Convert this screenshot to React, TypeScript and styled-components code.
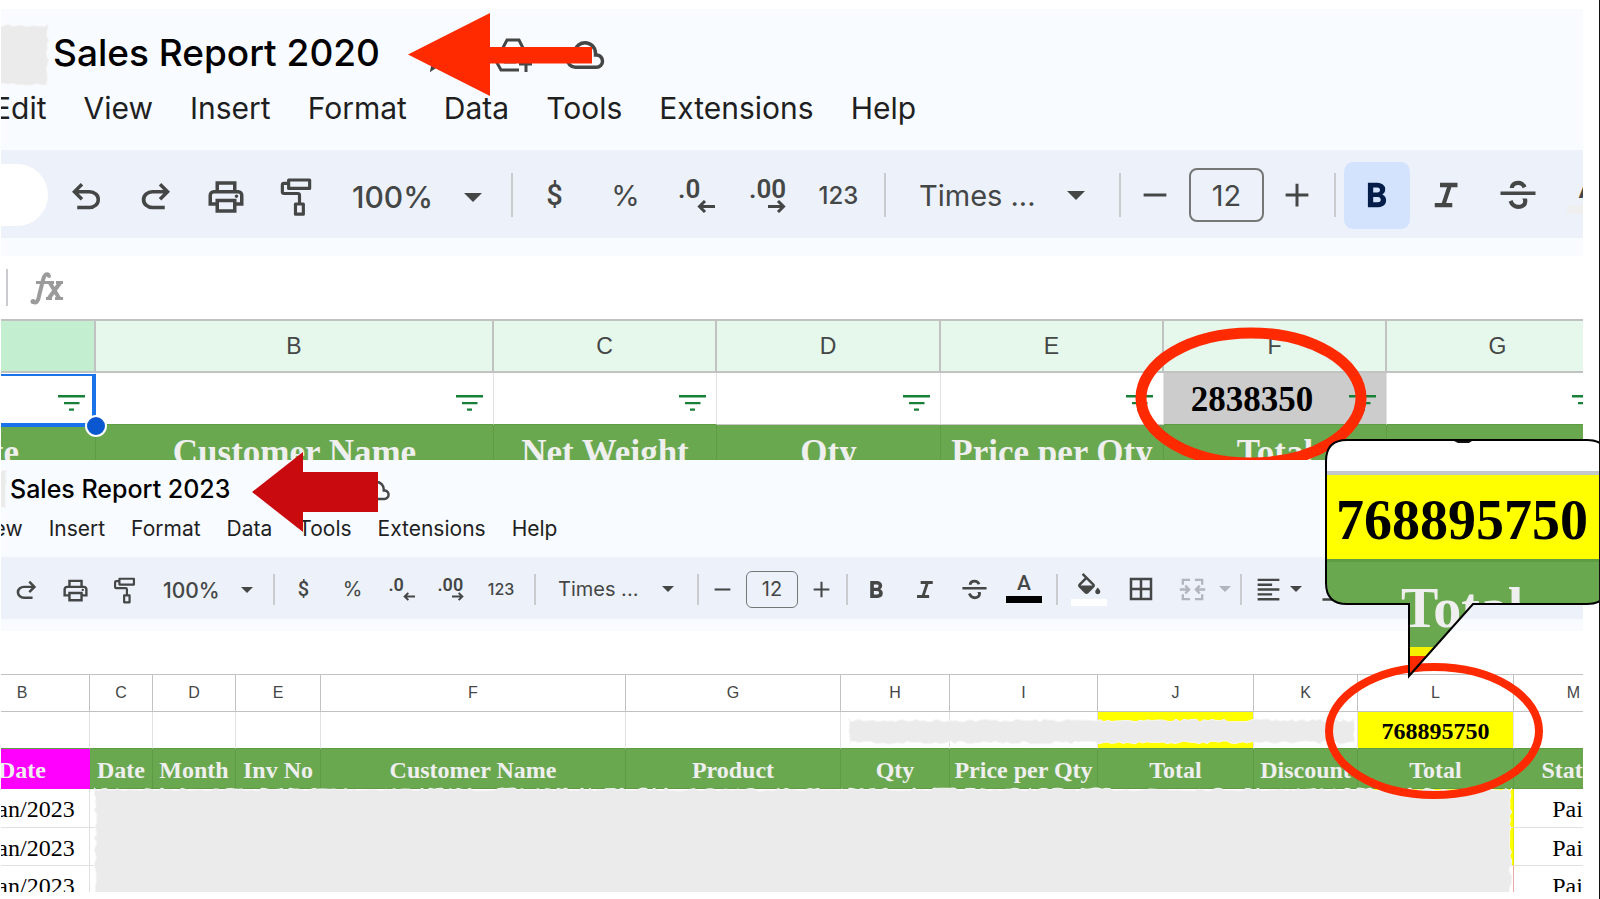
import React from 'react';
import styled, { createGlobalStyle, css, ThemeProvider } from 'styled-components';

const GlobalStyle = createGlobalStyle`
  *, *::before, *::after { box-sizing: border-box; }
  body { margin: 0; background: #fff; }
  h1 { margin: 0; }
  button, select, input { font: inherit; color: inherit; }
`;

const UI = '"Inter", "Roboto", sans-serif';
const NARROW = '"Roboto", "Inter", sans-serif';
const SERIF = '"Liberation Serif", "Times New Roman", serif';
const ARIAL = '"Liberation Sans", Arial, sans-serif';

/* Two zoom levels of the same spreadsheet chrome. */
const large = {
  headHeight: 141, headPad: 22, title: 37, titleLine: 44, titlePad: 52,
  menu: 30, menuLine: 36, menuGap: 37, menuTop: 15, menuStart: -8,
  bar: 88, strip: 18, formula: 63, tool: 30, font: 29, sub: 26, num: 24, icon: 42, drop: 4,
  divH: 44, divMargin: '0 6px 0 10px', boxW: 75, boxH: 54, boxBorder: 2, boxRadius: 8, boxGap: 6,
  caretW: 18, caretH: 9, swatchW: 44, swatchH: 9, activeH: 67,
  gridLine: 2, letter: 23, cell: 35,
};
const small: typeof large = {
  headHeight: 97, headPad: 14, title: 25, titleLine: 30, titlePad: 9,
  menu: 21, menuLine: 26, menuGap: 26, menuTop: 12, menuStart: -27,
  bar: 62, strip: 12, formula: 43, tool: 21, font: 20, sub: 18, num: 16, icon: 29, drop: 2,
  divH: 31, divMargin: '0 4px 0 7px', boxW: 52, boxH: 37, boxBorder: 1, boxRadius: 6, boxGap: 5,
  caretW: 12, caretH: 6, swatchW: 36, swatchH: 7, activeH: 46,
  gridLine: 1, letter: 16, cell: 24,
};
type Scale = typeof large;
declare module 'styled-components' {
  export interface DefaultTheme extends Scale {}
}

const Page = styled.main`
  position: relative;
  min-height: 100vh;
  padding: 9px 16px 7px 1px;
  border-right: 1px solid #111;
  overflow: hidden;
`;

const Sheet = styled.section`
  position: relative;
  overflow: hidden;
  background: #fff;
  font-family: ${UI};
`;

const Head = styled.header`
  height: ${p => p.theme.headHeight}px;
  padding-top: ${p => p.theme.headPad}px;
  background: #f8fbff;
`;

const TitleRow = styled.div`
  display: flex;
  align-items: center;
  height: ${p => p.theme.titleLine}px;
  padding-left: ${p => p.theme.titlePad}px;
`;

const Title = styled.h1`
  font-size: ${p => p.theme.title}px;
  line-height: ${p => p.theme.titleLine}px;
  font-weight: 500;
  color: #000;
  white-space: nowrap;
`;

const TitleIcons = styled.span<{ $gap: number; $start: number }>`
  display: flex;
  align-items: center;
  gap: ${p => p.$gap}px;
  margin-left: ${p => p.$start}px;
  padding-top: ${p => p.theme.drop}px;
  color: #444746;
`;

const Menu = styled.nav`
  display: flex;
  gap: ${p => p.theme.menuGap}px;
  margin-top: ${p => p.theme.menuTop}px;
  margin-left: ${p => p.theme.menuStart}px;
`;

const MenuItem = styled.button`
  border: 0;
  padding: 0;
  background: none;
  font-size: ${p => p.theme.menu}px;
  line-height: ${p => p.theme.menuLine}px;
  color: #1f1f1f;
  white-space: nowrap;
`;

const Toolbar = styled.div`
  display: flex;
  align-items: center;
  height: ${p => p.theme.bar}px;
  padding-top: 2px;
  background: #edf1fa;
  color: #444746;
`;

const EditTools = styled.div`
  display: flex;
  align-items: center;
  padding-top: ${p => p.theme.drop}px;
`;

const Strip = styled.div`
  height: ${p => p.theme.strip}px;
  background: #f8fbff;
`;

const SearchPill = styled.div`
  flex: none;
  width: 47px;
  height: 62px;
  margin-right: 3px;
  border-radius: 0 31px 31px 0;
  background: #fff;
`;

const Tool = styled.button<{ $w: number; $active?: boolean; $faded?: boolean }>`
  flex: none;
  display: flex;
  align-items: center;
  justify-content: center;
  width: ${p => p.$w}px;
  height: ${p => p.theme.activeH}px;
  padding: 0;
  border: 0;
  background: none;
  ${p => p.$faded && css`color: #b2b5bb;`}
  ${p => p.$active && css`
    color: #041e49;
    border: 0 solid transparent;
    border-width: 0 2px;
    border-radius: 10px;
    background: #d3e3fd;
    background-clip: padding-box;
  `}
`;

const Currency = styled.span`
  font: 500 ${p => p.theme.font}px/1 ${NARROW};
`;
const Percent = styled.span`
  font: 400 ${p => p.theme.font}px/1 ${UI};
`;
const Num = styled.span`
  font-size: ${p => p.theme.num}px;
  font-weight: 500;
`;

const Decimal = styled.span`
  display: flex;
  flex-direction: column;
  align-items: flex-start;
  width: ${p => Math.round(p.theme.icon * 0.88)}px;
  font: 600 ${p => p.theme.sub}px/${p => p.theme.sub - 4}px ${NARROW};
`;
const DecimalArrow = styled.svg`
  width: ${p => Math.round(p.theme.icon * 0.43)}px;
  height: ${p => Math.round(p.theme.icon * 0.3)}px;
  align-self: flex-end;
`;

const Divider = styled.span`
  flex: none;
  width: 2px;
  height: ${p => p.theme.divH}px;
  margin: ${p => p.theme.divMargin};
  background: #c9cbcf;
`;

const SelectWrap = styled.span<{ $w: number; $caretEnd: number }>`
  position: relative;
  flex: none;
  display: flex;
  align-items: center;
  width: ${p => p.$w}px;
  svg {
    position: absolute;
    right: ${p => p.$caretEnd}px;
    pointer-events: none;
  }
`;
const Select = styled.select<{ $pad: number; $font?: boolean }>`
  appearance: none;
  width: 100%;
  border: 0;
  padding: 0 0 0 ${p => p.$pad}px;
  background: none;
  font-size: ${p => (p.$font ? p.theme.font : p.theme.tool)}px;
  font-weight: ${p => (p.$font ? 400 : 500)};
`;

const SizeBox = styled.input`
  flex: none;
  width: ${p => p.theme.boxW}px;
  height: ${p => p.theme.boxH}px;
  margin: 0 ${p => p.theme.boxGap}px;
  padding: 0;
  border: ${p => p.theme.boxBorder}px solid #747775;
  border-radius: ${p => p.theme.boxRadius}px;
  background: none;
  text-align: center;
  font-size: ${p => p.theme.font}px;
`;

const Swatch = styled.span<{ $color: string }>`
  display: flex;
  flex-direction: column;
  align-items: center;
  justify-content: flex-end;
  gap: ${p => Math.round(p.theme.swatchH / 2)}px;
  font: 500 ${p => p.theme.tool}px/${p => Math.round(p.theme.tool * 0.8)}px ${NARROW};
  &::after {
    content: '';
    width: ${p => p.theme.swatchW}px;
    height: ${p => p.theme.swatchH}px;
    background: ${p => p.$color};
  }
`;

const FormulaBar = styled.div`
  display: flex;
  align-items: center;
  gap: 22px;
  height: ${p => p.theme.formula}px;
  padding-left: 5px;
  color: #9b9b9b;
`;
const FormulaDivider = styled.span`
  width: 2px;
  height: 37px;
  background: #c9cbcf;
`;

/* Grid */
const GridView = styled.div<{ $h: number; $shift: number }>`
  position: relative;
  max-height: ${p => p.$h}px;
  overflow: hidden;
  table { margin-left: -${p => p.$shift}px; }
`;

const Table = styled.table`
  table-layout: fixed;
  width: 1px;
  border-collapse: separate;
  border-spacing: 0;
  border-top: ${p => p.theme.gridLine}px solid #c1c3c3;
`;

const Col = styled.col<{ $w: number }>`
  width: ${p => p.$w}px;
`;

const Letter = styled.th<{ $bg?: string }>`
  height: ${p => (p.theme.gridLine === 2 ? 52 : 37)}px;
  padding: 0;
  border: solid #c1c3c3;
  border-width: 0 ${p => p.theme.gridLine}px ${p => p.theme.gridLine}px 0;
  background: ${p => p.$bg ?? '#fff'};
  font: 400 ${p => p.theme.letter}px/1 ${ARIAL};
  color: #444746;
`;

const Cell = styled.td<{ $h: number; $bg?: string; $bold?: boolean; $edge?: string; $under?: string }>`
  position: relative;
  height: ${p => p.$h}px;
  padding: 2px 0 0;
  border: solid;
  border-width: 0 1px 1px 0;
  border-color: transparent ${p => p.$edge ?? '#e1e1e1'} ${p => p.$under ?? '#e1e1e1'} transparent;
  background: ${p => p.$bg ?? '#fff'};
  font: ${p => (p.$bold ? 700 : 400)} ${p => p.theme.cell}px/1 ${SERIF};
  color: #000;
  text-align: center;
  white-space: nowrap;
`;

const HeadCell = styled.th<{ $h: number; $bg?: string }>`
  height: ${p => p.$h}px;
  padding: 2px 0 0;
  border: solid ${p => p.$bg ?? '#5f9a45'};
  border-width: 0 1px 1px 0;
  background: ${p => p.$bg ?? '#6aa84f'};
  font: 700 ${p => p.theme.cell}px/1 ${SERIF};
  color: #efefef;
  white-space: nowrap;
`;

const FilterCell = styled.div`
  display: flex;
  align-items: center;
`;
const FilterValue = styled.span`
  flex: 1;
`;
const FilterButton = styled.button`
  display: flex;
  justify-content: flex-end;
  width: 46px;
  padding: 6px 10px 0 0;
  border: 0;
  background: none;
`;

const Selection = styled.span`
  position: absolute;
  z-index: 1;
  inset: 1px -1px -3px 0;
  border: 4px solid #1a73e8;
  border-top-width: 2px;
  pointer-events: none;
  &::after {
    content: '';
    position: absolute;
    right: -15px;
    bottom: -14px;
    width: 22px;
    height: 22px;
    border: 2px solid #fff;
    border-radius: 50%;
    background: #0b57d0;
  }
`;

/* Marks drawn over the sheets */
const Mark = styled.svg<{ $x: number; $y: number }>`
  position: absolute;
  left: ${p => p.$x}px;
  top: ${p => p.$y}px;
  overflow: visible;
  pointer-events: none;
`;

const BALLOON = 'M22 1H262Q283 1 283 22V144Q283 165 262 165H148L84 237V165H22Q1 165 1 144V22Q1 1 22 1Z';

const Callout = styled.aside`
  position: absolute;
  top: 439px;
  right: 0;
  width: 274px;
`;
const CalloutBody = styled.div`
  display: flex;
  flex-direction: column;
  clip-path: path('${BALLOON}');
  font: 700 56px/1 ${SERIF};
`;
const CalloutTop = styled.div`
  height: 36px;
  border-bottom: 4px solid #c3c8c8;
  background: #fff;
`;
const CalloutValue = styled.div`
  height: 84px;
  line-height: 90px;
  padding-left: 11px;
  background: #ff0;
  color: #000;
`;
const CalloutLabel = styled.div`
  height: 88px;
  padding: 18px 0 0 76px;
  border-top: 3px solid #5f9a45;
  background: #6aa84f;
  color: #efefef;
`;
const CalloutTail = styled.div`
  height: 32px;
  border-top: 9px solid #f5f000;
  background: #ff2a00;
`;

/* Icons */
const M = ({ d, size }: { d: string; size: number }) => (
  <svg width={size} height={size} viewBox="0 -960 960 960" fill="currentColor" aria-hidden="true">
    <path d={d} />
  </svg>
);
const UNDO = 'M280-200v-80h284q63 0 109.5-40T720-420q0-60-46.5-100T564-560H312l104 104-56 56-200-200 200-200 56 56-104 104h252q97 0 169.5 63T800-420q0 94-72.5 157T564-200H280Z';
const REDO = 'M396-200q-97 0-169.500-63T154-420q0-94 72.500-157T396-640h252L544-744l56-56 200 200-200 200-56-56 104-104H396q-63 0-109.500 40T240-420q0 60 46.500 100T396-280h284v80H396Z';
const PRINT = 'M640-640v-120H320v120h-80v-200h480v200h-80Zm-480 80h640-640Zm560 100q17 0 28.5-11.5T760-500q0-17-11.5-28.5T720-540q-17 0-28.5 11.5T680-500q0 17 11.5 28.5T720-460Zm-80 260v-160H320v160h320Zm80 80H240v-160H80v-240q0-51 35-85.5t85-34.500h560q51 0 85.5 34.5T880-520v240H720v160Zm80-240v-160q0-17-11.5-28.5T760-560H200q-17 0-28.5 11.5T160-520v160h80v-80h480v80h80Z';
const BOLD = 'M272-200v-560h221q65 0 120 40t55 111q0 51-23 78.5T602-491q25 11 55.5 41t30.5 90q0 89-65 124.5T501-200H272Zm121-112h104q48 0 58.5-24.5T566-372q0-11-10.500-35.500T494-432H393v120Zm0-228h93q33 0 48-17t15-38q0-24-17-39t-44-15h-95v109Z';
const ITALIC = 'M200-200v-100h160l120-360H320v-100h400v100H580L460-300h140v100H200Z';
const STRIKE = 'M486-160q-76 0-135-45t-85-123l88-38q14 48 48.500 79t85.500 31q42 0 76-20t34-64q0-18-7-33t-19-27h112q5 14 7.500 28.500T694-340q0 86-61.500 133T486-160ZM80-480v-80h800v80H80Zm402-326q66 0 115.500 32.500T674-674l-88 39q-9-29-33.500-52T484-710q-41 0-68 18.500T386-640h-96q2-69 54.500-117.500T482-806Z';
const ALIGN = 'M120-120v-80h720v80H120Zm0-160v-80h480v80H120Zm0-160v-80h720v80H120Zm0-160v-80h480v80H120Zm0-160v-80h720v80H120Z';
const FILL = 'm247-904 57-56 343 343q23 23 23 57t-23 57L457-313q-23 23-57 23t-57-23L153-503q-23-23-23-57t23-57l190-191-96-96Zm153 153L209-560h382L400-751Zm360 471q-33 0-56.5-23.5T680-360q0-21 12.5-45t27.5-45q9-12 19-25t21-25q11 12 21 25t19 25q15 21 27.5 45t12.500 45q0 33-23.500 56.500T760-280Z';
const CLOUD = 'M260-160q-91 0-155.500-63T40-377q0-78 47-139t123-78q25-92 100-149t170-57q117 0 198.500 81.500T760-520q69 8 114.500 59.500T920-340q0 75-52.500 127.500T740-160H260Zm0-80h480q42 0 71-29t29-71q0-42-29-71t-71-29h-60v-80q0-83-58.500-141.500T480-720q-83 0-141.500 58.500T280-520h-20q-58 0-99 41t-41 99q0 58 41 99t99 41Z';

const Paint = ({ size }: { size: number }) => (
  <svg width={size} height={size} viewBox="0 0 24 24" fill="none" stroke="currentColor" strokeWidth="1.8" strokeLinejoin="round">
    <path d="M7.800 2.300h12v4.800h-12zM7.800 4.200H5.200Q4.200 4.200 4.200 5.200V9Q4.200 10 5.200 10H13Q14 10 14 11V16M11.700 16h4.500v5.800h-4.500z" />
  </svg>
);
const Caret = ({ t }: { t: Scale }) => (
  <svg width={t.caretW} height={t.caretH} viewBox="0 0 16 8" preserveAspectRatio="none" fill="currentColor"><path d="M0 0H16L8 8Z" /></svg>
);
const Sign = ({ t, plus }: { t: Scale; plus?: boolean }) => (
  <svg width={t.icon} height={t.icon} viewBox="0 0 24 24" stroke="currentColor" strokeWidth="1.700"><path d={plus ? 'M5.500 12H18.500M12 5.500V18.500' : 'M5.500 12H18.500'} /></svg>
);
const ArrowGlyph = ({ right }: { right?: boolean }) => (
  <DecimalArrow viewBox="0 0 18 13" fill="none" stroke="currentColor" strokeWidth="3">
    <path d={right ? 'M0 6.500H16M10 1L15.500 6.500L10 12' : 'M18 6.500H2M8 1L2.500 6.500L8 12'} />
  </DecimalArrow>
);
const Filter = () => (
  <svg width="27" height="16" viewBox="0 0 27 16" fill="#188038"><path d="M0 0H27V2.500H0zM6 7H21.500V9.200H6zM11 13.500H16V15.700H11z" /></svg>
);
const Borders = ({ size }: { size: number }) => (
  <svg width={size} height={size} viewBox="0 0 24 24" fill="none" stroke="currentColor" strokeWidth="2"><path d="M4 4h16v16H4zM12 4v16M4 12h16" /></svg>
);
const Merge = ({ size }: { size: number }) => (
  <svg width={size} height={size} viewBox="0 0 24 24" fill="none" stroke="currentColor" strokeWidth="1.900">
    <path d="M10 4H4V8M4 16V20H10M14 4H20V8M20 16V20H14M1.500 12H9M6 8.800L9.200 12L6 15.200M22.500 12H15M18 8.800L14.800 12L18 15.200" />
  </svg>
);
const VAlign = ({ size }: { size: number }) => (
  <svg width={size} height={size} viewBox="0 0 24 24" fill="none" stroke="currentColor" strokeWidth="2"><path d="M3 21H21M12 3V16M8 12L12 16L16 12" /></svg>
);
const DriveAdd = () => (
  <svg width="37" height="34" viewBox="-2 0 37 34" overflow="visible" fill="none" stroke="currentColor" strokeWidth="3">
    <path d="M24 32H6L1 23L12 2H24L31 16M9 24H21M31 20V34M24 26H37" />
  </svg>
);
const Star = () => (
  <svg width="36" height="34" viewBox="0 0 36 34" fill="none" stroke="currentColor" strokeWidth="3">
    <path d="M18 3L22 13L33 14L25 21L27 31L18 25L9 31L11 21L3 14L14 13Z" />
  </svg>
);
const Fx = () => (
  <svg width="34" height="34" viewBox="0 0 34 34" fill="none" stroke="currentColor" strokeWidth="4">
    <path d="M3 31Q8 33 9 25L13 9Q15 1 19 4" />
    <path d="M6 11.500H18M18 11.500H24M26 11.500H33M16 27.500H22M25 27.500H33" strokeWidth="3" />
    <path d="M20 12L29 27M30 12L19 27" />
    <circle cx="3" cy="30.500" r="2.500" fill="currentColor" stroke="none" />
    <circle cx="19" cy="5" r="2" fill="currentColor" stroke="none" />
  </svg>
);

/* Grey brushed-out area with a ragged outline. */
const roughPath = (w: number, h: number, amp: number) => {
  let seed = 7;
  const r = () => { seed = (seed * 16807) % 2147483647; return Math.round((seed / 2147483647) * amp * 10) / 10; };
  const pts: string[] = [];
  for (let x = 0; x < w; x += 4) pts.push(`${x} ${r()}`);
  for (let y = 0; y < h; y += 4) pts.push(`${w - r()} ${y}`);
  for (let x = w; x > 0; x -= 4) pts.push(`${x} ${h - r()}`);
  for (let y = h; y > 0; y -= 4) pts.push(`${r()} ${y}`);
  return `M${pts.join('L')}Z`;
};
const Patch = ({ x, y, w, h, amp = 3 }: { x: number; y: number; w: number; h: number; amp?: number }) => (
  <Mark $x={x} $y={y} width={w} height={h}><path d={roughPath(w, h, amp)} fill="#ebebeb" stroke="#f6f6f6" strokeWidth="1" /></Mark>
);

const NumberTools = ({ w, last }: { w: number; last: number }) => (
  <>
    <Tool $w={w} aria-label="Format as currency"><Currency>$</Currency></Tool>
    <Tool $w={w} aria-label="Format as percent"><Percent>%</Percent></Tool>
    <Tool $w={w} aria-label="Decrease decimal places"><Decimal>.0<ArrowGlyph /></Decimal></Tool>
    <Tool $w={w} aria-label="Increase decimal places"><Decimal>.00<ArrowGlyph right /></Decimal></Tool>
    <Tool $w={last} aria-label="More formats"><Num>123</Num></Tool>
  </>
);
type DropdownProps = { t: Scale; w: number; pad: number; end: number; value: string; label: string; font?: boolean };
const Dropdown = ({ t, w, pad, end, value, label, font }: DropdownProps) => (
  <SelectWrap $w={w} $caretEnd={end}>
    <Select $pad={pad} $font={font} aria-label={label}><option>{value}</option></Select>
    <Caret t={t} />
  </SelectWrap>
);
const MenuBar = ({ items }: { items: string[] }) => (
  <Menu>{items.map(i => <MenuItem key={i}>{i}</MenuItem>)}</Menu>
);

const GREEN = '#5f9a45';

function Sheet2020() {
  const t = large;
  const cols = [223, 398, 223, 224, 223, 223, 223];
  const letters = ['', 'B', 'C', 'D', 'E', 'F', 'G'];
  const labels = ['Date', 'Customer Name', 'Net Weight', 'Qty', 'Price per Qty', 'Total', ''];
  return (
    <ThemeProvider theme={t}>
      <Sheet>
        <Head>
          <TitleRow>
            <Title>Sales Report 2020</Title>
            <TitleIcons $start={43} $gap={34}>
              <Star /><DriveAdd /><M d={CLOUD} size={42} />
            </TitleIcons>
          </TitleRow>
          <MenuBar items={['Edit', 'View', 'Insert', 'Format', 'Data', 'Tools', 'Extensions', 'Help']} />
        </Head>
        <Toolbar>
          <SearchPill />
          <EditTools>
            <Tool $w={70} aria-label="Undo"><M d={UNDO} size={t.icon} /></Tool>
            <Tool $w={70} aria-label="Redo"><M d={REDO} size={t.icon} /></Tool>
            <Tool $w={70} aria-label="Print"><M d={PRINT} size={t.icon} /></Tool>
            <Tool $w={70} aria-label="Paint format"><Paint size={t.icon} /></Tool>
            <Dropdown t={t} w={170} pad={21} end={19} value="100%" label="Zoom" />
          </EditTools>
          <Divider />
          <NumberTools w={71} last={71} />
          <Divider />
          <Dropdown t={t} w={217} pad={27} end={24} value="Times ..." label="Font" font />
          <Divider />
          <Tool $w={56} aria-label="Decrease font size"><Sign t={t} /></Tool>
          <SizeBox aria-label="Font size" defaultValue="12" />
          <Tool $w={54} aria-label="Increase font size"><Sign t={t} plus /></Tool>
          <Divider />
          <Tool $w={70} $active aria-label="Bold"><M d={BOLD} size={t.icon} /></Tool>
          <Tool $w={70} aria-label="Italic"><M d={ITALIC} size={t.icon} /></Tool>
          <Tool $w={71} aria-label="Strikethrough"><M d={STRIKE} size={t.icon} /></Tool>
          <Tool $w={71} aria-label="Text color"><Swatch $color="#efefef">A</Swatch></Tool>
        </Toolbar>
        <Strip />
        <FormulaBar><FormulaDivider /><Fx /></FormulaBar>
        <GridView $h={141} $shift={128}>
          <Table>
            <colgroup>{cols.map((w, i) => <Col key={i} $w={w} />)}</colgroup>
            <thead>
              <tr>{letters.map((l, i) => <Letter key={i} $bg={i ? '#e6f8ec' : '#c4eed0'}>{l}</Letter>)}</tr>
            </thead>
            <tbody>
              <tr>
                {letters.map((l, i) => (
                  <Cell key={i} $h={52} $bold $bg={l === 'F' ? '#ccc' : undefined} $under={l === 'D' || l === 'E' ? '#c9c9c9' : GREEN}>
                    <FilterCell>
                      <FilterValue>{l === 'F' ? '2838350' : ''}</FilterValue>
                      <FilterButton aria-label="Filter"><Filter /></FilterButton>
                    </FilterCell>
                    {i === 0 && <Selection />}
                  </Cell>
                ))}
              </tr>
              <tr>{labels.map((l, i) => <HeadCell key={i} $h={54}>{l}</HeadCell>)}</tr>
            </tbody>
          </Table>
        </GridView>
        <Patch x={-4} y={15} w={52} h={62} />
        <Mark $x={407} $y={4} width="185" height="84"><path d="M0 41.500L82 0V34H184V50.500H82V83Z" fill="#ff2a00" /></Mark>
        <Mark $x={1134} $y={319} width="232" height="140"><ellipse cx="116" cy="70" rx="110" ry="65" fill="none" stroke="#ff2a00" strokeWidth="11" /></Mark>
      </Sheet>
    </ThemeProvider>
  );
}

function Sheet2023() {
  const t = small;
  const cols = [135, 63, 83, 85, 305, 215, 109, 148, 156, 104, 156, 120];
  const letters = 'BCDEFGHIJKLM'.split('');
  const labels = ['Date', 'Date', 'Month', 'Inv No', 'Customer Name', 'Product', 'Qty', 'Price per Qty', 'Total', 'Discount', 'Total', 'Status'];
  return (
    <ThemeProvider theme={t}>
      <Sheet>
        <Head>
          <TitleRow>
            <Title>Sales Report 2023</Title>
            <TitleIcons $start={132} $gap={0}><M d={CLOUD} size={29} /></TitleIcons>
          </TitleRow>
          <MenuBar items={['View', 'Insert', 'Format', 'Data', 'Tools', 'Extensions', 'Help']} />
        </Head>
        <Toolbar>
          <EditTools>
            <Tool $w={50} aria-label="Redo"><M d={REDO} size={t.icon} /></Tool>
            <Tool $w={49} aria-label="Print"><M d={PRINT} size={t.icon} /></Tool>
            <Tool $w={49} aria-label="Paint format"><Paint size={t.icon} /></Tool>
            <Dropdown t={t} w={117} pad={14} end={13} value="100%" label="Zoom" />
          </EditTools>
          <Divider />
          <NumberTools w={49} last={52} />
          <Divider />
          <Dropdown t={t} w={150} pad={18} end={16} value="Times ..." label="Font" font />
          <Divider />
          <Tool $w={38} aria-label="Decrease font size"><Sign t={t} /></Tool>
          <SizeBox aria-label="Font size" defaultValue="12" />
          <Tool $w={36} aria-label="Increase font size"><Sign t={t} plus /></Tool>
          <Divider />
          <Tool $w={49} aria-label="Bold"><M d={BOLD} size={t.icon} /></Tool>
          <Tool $w={49} aria-label="Italic"><M d={ITALIC} size={t.icon} /></Tool>
          <Tool $w={49} aria-label="Strikethrough"><M d={STRIKE} size={t.icon} /></Tool>
          <Tool $w={50} aria-label="Text color"><Swatch $color="#000">A</Swatch></Tool>
          <Divider />
          <Tool $w={53} aria-label="Fill color">
            <Swatch $color="#fff"><svg width="30" height="22" viewBox="0 -960 960 704" fill="currentColor"><path d={FILL} /></svg></Swatch>
          </Tool>
          <Tool $w={52} aria-label="Borders"><Borders size={30} /></Tool>
          <Tool $w={50} $faded aria-label="Merge cells"><Merge size={29} /></Tool>
          <Tool $w={16} $faded aria-label="Merge options"><Caret t={t} /></Tool>
          <Divider />
          <Tool $w={44} aria-label="Horizontal align"><M d={ALIGN} size={t.icon} /></Tool>
          <Tool $w={12} aria-label="Align options"><Caret t={t} /></Tool>
          <Tool $w={62} aria-label="Vertical align"><VAlign size={28} /></Tool>
        </Toolbar>
        <Strip />
        <FormulaBar />
        <GridView $h={218} $shift={46}>
          <Table>
            <colgroup>{cols.map((w, i) => <Col key={i} $w={w} />)}</colgroup>
            <thead><tr>{letters.map(l => <Letter key={l}>{l}</Letter>)}</tr></thead>
            <tbody>
              <tr>
                {letters.map(l => (
                  <Cell key={l} $h={37} $bold $bg={l === 'J' || l === 'L' ? '#ff0' : undefined} $under={GREEN}>
                    {l === 'L' ? '768895750' : ''}
                  </Cell>
                ))}
              </tr>
              <tr>{labels.map((l, i) => <HeadCell key={i} $h={40} $bg={i ? undefined : '#f0f'}>{l}</HeadCell>)}</tr>
              {[39, 38, 38].map((h, r) => (
                <tr key={r}>
                  {letters.map(l => (
                    <Cell key={l} $h={h} $bg={l === 'L' && r < 2 ? '#ff0' : undefined} $edge={l === 'L' ? (r < 2 ? '#e6e600' : '#e8a9a9') : undefined}>
                      {l === 'B' ? '1/Jan/2023' : l === 'M' ? 'Paid' : ''}
                    </Cell>
                  ))}
                </tr>
              ))}
            </tbody>
          </Table>
          <Patch x={93} y={114} w={1418} h={110} />
          <Patch x={847} y={45} w={507} h={25} />
        </GridView>
        <Patch x={-6} y={10} w={12} h={38} amp={2} />
      </Sheet>
    </ThemeProvider>
  );
}

export default function App() {
  return (
    <>
      <GlobalStyle />
      <Page>
        <Sheet2020 />
        <Sheet2023 />
        <Mark $x={252} $y={452} width="127" height="80"><path d="M0 40L51 0V20H126V60H51V80Z" fill="#c90a0f" /></Mark>
        <Mark $x={1325} $y={663} width="218" height="137"><ellipse cx="109" cy="68" rx="105" ry="64" fill="none" stroke="#ff2a00" strokeWidth="8" /></Mark>
        <Callout>
          <CalloutBody>
            <CalloutTop />
            <CalloutValue>768895750</CalloutValue>
            <CalloutLabel>Total</CalloutLabel>
            <CalloutTail />
          </CalloutBody>
          <Mark $x={0} $y={0} width="284" height="240">
            <path d={BALLOON} fill="none" stroke="#000" strokeWidth="2" />
            <path d="M129 2H147L144 4H133Z" fill="#111" />
          </Mark>
        </Callout>
      </Page>
    </>
  );
}
